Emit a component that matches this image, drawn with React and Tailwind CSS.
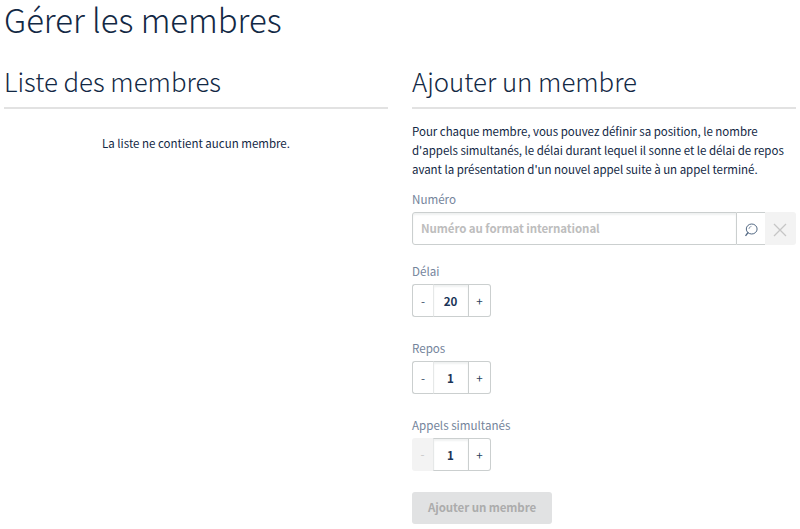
import React from "react";

function SectionTitle({ children }) {
  return (
    <h2 className="h-[42px] border-b-2 border-[#e2e2e2] text-[25.8px] leading-[27px] font-light whitespace-nowrap">
      {children}
    </h2>
  );
}

function Label({ children }) {
  return <label className="block h-5 text-[11.6px] leading-[21px] text-[#74849b]">{children}</label>;
}

function Stepper({ value, minDisabled }) {
  return (
    <div className="flex h-[33px] w-[79px] text-[11.6px] leading-[32px] text-[#122844]">
      <button
        disabled={minDisabled}
        className={
          minDisabled
            ? "w-[21px] rounded-l-[3px] bg-[#f3f3f3] text-[#c8c8c8]"
            : "w-[21px] rounded-l-[3px] border border-r-0 border-[#cbcfcf] text-[#3c5069]"
        }
      >
        -
      </button>
      <div className="w-9 border border-[#cbcfcf] border-l-[#e6e8e8] pr-px text-center font-bold text-[#1b3558] shadow-[inset_0_2px_2px_#f0f2f2]">
        {value}
      </div>
      <button className="w-[22px] rounded-r-[3px] border border-l-0 border-[#cbcfcf] text-[#2b4260]">+</button>
    </div>
  );
}

export default function App() {
  return (
    <main className="h-[529px] w-[800px] bg-white px-1 font-['Noto_Sans_CJK_SC','Noto_Sans_CJK_JP',sans-serif] text-[#122844]">
      <h1 className="h-[67px] text-[32.9px] leading-[38px] font-light whitespace-nowrap">Gérer les membres</h1>
      <div className="grid grid-cols-2 gap-6">
        <section className="min-w-0">
          <SectionTitle>Liste des membres</SectionTitle>
          <p className="mt-[25px] text-center text-[11.5px] leading-[19px]">La liste ne contient aucun membre.</p>
        </section>
        <section className="min-w-0">
          <SectionTitle>Ajouter un membre</SectionTitle>
          <p className="mt-[13px] text-[11.5px] leading-[19.2px] tracking-[-0.03px] whitespace-nowrap">
            Pour chaque membre, vous pouvez définir sa position, le nombre
            <br />
            d'appels simultanés, le délai durant lequel il sonne et le délai de repos
            <br />
            avant la présentation d'un nouvel appel suite à un appel terminé.
          </p>
          <div className="mt-[9px]">
            <Label>Numéro</Label>
            <div className="mt-[3px] flex h-[33px]">
              <input
                placeholder="Numéro au format international"
                className="w-[325px] rounded-l-[3px] border border-[#cbcfcf] px-2 pt-px text-[11.5px] font-bold tracking-[-0.08px] shadow-[inset_0_2px_2px_#f0f2f2] placeholder:text-[#bdbdbd]"
              />
              <button className="flex w-7 items-center justify-center border-y border-[#cbcfcf] pt-[3px]">
                <svg width="14" height="14" viewBox="0 0 14 14" fill="none" stroke="#526883">
                  <ellipse cx="7.7" cy="6" rx="5.4" ry="5" />
                  <path d="M4.1 9.5 1.5 12.8" strokeWidth="1.3" />
                  <path d="M4.9 6a2.8 2.8 0 0 1 2.6-2.6" strokeWidth=".6" />
                </svg>
              </button>
              <button disabled className="flex w-[31px] items-center justify-center rounded-r-[3px] bg-[#f3f3f3] pt-[3px] pr-px">
                <svg width="14" height="14" viewBox="0 0 14 14" fill="none" stroke="#c6c6c6" strokeWidth="1.3">
                  <path d="m1 1 12 12M13 1 1 13" />
                </svg>
              </button>
            </div>
          </div>
          <div className="mt-4">
            <Label>Délai</Label>
            <div className="mt-[3px]"><Stepper value={20} /></div>
          </div>
          <div className="mt-[21px]">
            <Label>Repos</Label>
            <div className="mt-[3px]"><Stepper value={1} /></div>
          </div>
          <div className="mt-[21px]">
            <Label>Appels simultanés</Label>
            <div className="mt-[3px]"><Stepper value={1} minDisabled /></div>
          </div>
          <button disabled className="mt-[21px] block h-8 w-[140px] rounded-[3px] bg-[#e1e2e3] pt-px text-[11.5px] font-bold tracking-[-0.08px] whitespace-nowrap text-[#acacac]">
            Ajouter un membre
          </button>
        </section>
      </div>
    </main>
  );
}
